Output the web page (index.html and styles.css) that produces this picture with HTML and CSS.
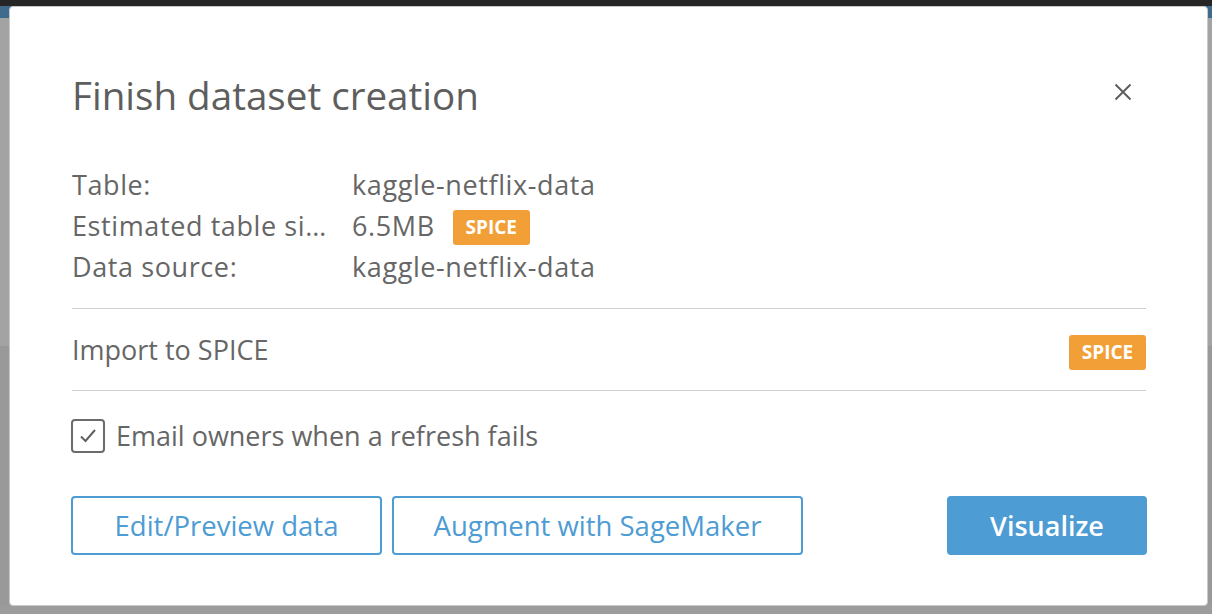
FILE: index.html
```html
<!DOCTYPE html>
<html lang="en">
<head>
<meta charset="utf-8">
<title>Finish dataset creation</title>
<link rel="stylesheet" href="styles.css">
</head>
<body>
<div class="topbar"></div>
<div class="stage">
  <div class="modal">
    <div class="modal-header">
      <h1 class="modal-title">Finish dataset creation</h1>
      <button class="close-btn" aria-label="Close">
        <svg width="18" height="18" viewBox="0 0 18 18"><path d="M1.5 1.5 L16.5 16.5 M16.5 1.5 L1.5 16.5" stroke="#5f5f5f" stroke-width="2" fill="none"/></svg>
      </button>
    </div>
    <div class="info-grid">
      <div class="info-label">Table:</div>
      <div class="info-value">kaggle-netflix-data</div>
      <div class="info-label" title="Estimated table size:">Estimated table size:</div>
      <div class="info-value"><span>6.5MB</span><span class="badge badge-size">SPICE</span></div>
      <div class="info-label">Data source:</div>
      <div class="info-value">kaggle-netflix-data</div>
    </div>
    <div class="import-row">
      <span>Import to SPICE</span>
      <span class="badge badge-import">SPICE</span>
    </div>
    <div class="check-row">
      <span class="checkbox">
        <svg width="18" height="16" viewBox="0 0 18 16"><path d="M2 8.5 L6.5 13 L16 2" stroke="#5f5f5f" stroke-width="2" fill="none"/></svg>
      </span>
      <span>Email owners when a refresh fails</span>
    </div>
    <div class="actions">
      <button class="btn btn-outline btn-edit">Edit/Preview data</button>
      <button class="btn btn-outline btn-augment">Augment with SageMaker</button>
      <button class="btn btn-primary">Visualize</button>
    </div>
  </div>
</div>
</body>
</html>
```
FILE: styles.css
```css
html, body {
  margin: 0;
  padding: 0;
}
body {
  width: 1212px;
  height: 614px;
  overflow: hidden;
  background: #9c9c9c;
  font-family: "Open Sans", "Noto Sans", sans-serif;
  color: #666;
}
.topbar {
  height: 6px;
  background: #262626;
}
.stage {
  padding-left: 9px;
  background: linear-gradient(to bottom, #3f6b8c 0, #3f6b8c 12px, #a3a3a3 12px, #a3a3a3 340px, #999 340px);
}
.modal {
  box-sizing: border-box;
  width: 1199px;
  height: 600px;
  background: #fff;
  border: 1px solid #c9c9c9;
  border-radius: 4px;
  padding: 0 61px 0 62px;
  display: flex;
  flex-direction: column;
}
.modal-header {
  display: flex;
  justify-content: space-between;
  align-items: flex-start;
  margin-top: 64px;
}
.modal-title {
  margin: 0;
  font-size: 38.6px;
  line-height: 48px;
  font-weight: 400;
  color: #5e5e5e;
}
.close-btn {
  width: 46px;
  height: 30px;
  margin-top: 6px;
  padding: 0;
  border: 0;
  background: transparent;
  display: flex;
  align-items: center;
  justify-content: center;
  cursor: pointer;
}
.info-grid {
  display: grid;
  grid-template-columns: 266px 1fr;
  grid-auto-rows: 41px;
  column-gap: 14px;
  margin-top: 45px;
  font-size: 27px;
  line-height: 41px;
}
.info-label {
  white-space: nowrap;
  overflow: hidden;
  text-overflow: ellipsis;
  letter-spacing: 0.6px;
}
.info-value {
  display: flex;
  align-items: center;
  gap: 18px;
  letter-spacing: 0.6px;
}
.badge {
  display: inline-flex;
  align-items: center;
  justify-content: center;
  width: 77px;
  height: 35px;
  background: #f29f38;
  color: #fff;
  border-radius: 3px;
  font-size: 19px;
  font-weight: 700;
  line-height: 1;
  letter-spacing: 0;
}
.badge-size {
  margin-top: 4px;
}
.badge-import {
  margin-top: 6px;
}
.import-row {
  display: flex;
  justify-content: space-between;
  align-items: center;
  margin-top: 21px;
  height: 81px;
  border-top: 1px solid #cfcfcf;
  border-bottom: 1px solid #cfcfcf;
  font-size: 27px;
}
.check-row {
  display: flex;
  align-items: center;
  gap: 11px;
  margin-top: 28px;
  font-size: 27px;
  line-height: 34px;
  margin-left: -1px;
}
.checkbox {
  box-sizing: border-box;
  width: 34px;
  height: 34px;
  border: 2px solid #6b6b6b;
  border-radius: 4px;
  display: flex;
  align-items: center;
  justify-content: center;
}
.actions {
  display: flex;
  margin-top: 43px;
  margin-left: -1px;
  gap: 10px;
}
.btn {
  box-sizing: border-box;
  height: 59px;
  border-radius: 4px;
  font-family: "Open Sans", "Noto Sans", sans-serif;
  font-size: 27.5px;
  cursor: pointer;
}
.btn-outline {
  background: #fff;
  border: 2px solid #4d9cd4;
  color: #4d9cd4;
}
.btn-edit { width: 311px; }
.btn-augment { width: 411px; }
.btn-primary {
  margin-left: auto;
  margin-right: -1px;
  width: 200px;
  background: #4d9cd4;
  border: 2px solid #4d9cd4;
  color: #fff;
  font-weight: 600;
  font-size: 27px;
}
```
